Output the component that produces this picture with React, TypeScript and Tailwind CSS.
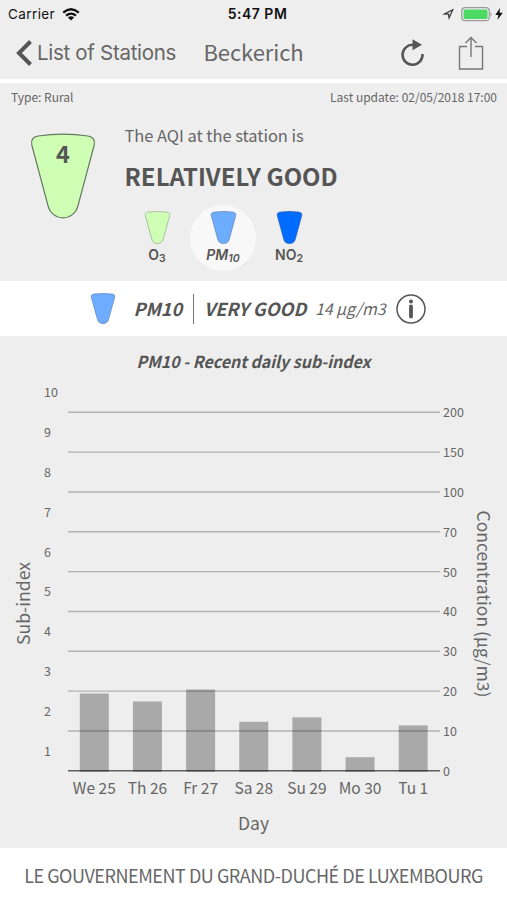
const days = [
  { label: 'We 25', value: 1.94 },
  { label: 'Th 26', value: 1.74 },
  { label: 'Fr 27', value: 2.04 },
  { label: 'Sa 28', value: 1.23 },
  { label: 'Su 29', value: 1.34 },
  { label: 'Mo 30', value: 0.34 },
  { label: 'Tu 1', value: 1.14 },
]

const concentrations = [200, 150, 100, 70, 50, 40, 30, 20, 10, 0]

const pollutants = [
  { name: 'O', sub: '3', color: '#ceffb5', stroke: '#93a889', active: false },
  { name: 'PM', sub: '10', color: '#6eacff', stroke: '#5b80b4', active: true },
  { name: 'NO', sub: '2', color: '#006cff', stroke: '#1d58ad', active: false },
]

// chart geometry
const TOP = 76.3
const STEP = 39.83
const BASE = TOP + STEP * 9
const LEFT = 68
const RIGHT = 440

function Cone({ color, stroke, strokeWidth = 1, className }: { color: string; stroke: string; strokeWidth?: number; className: string }) {
  return (
    <svg viewBox="0 0 64 86" className={className} preserveAspectRatio="none">
      <path
        d="M7 3Q32 -.8 57 3C62 3.800 64.300 7 63.200 12L46.800 73.400A15.300 15.300 0 0 1 17.200 73.400L.8 12C-.3 7 2 3.800 7 3Z"
        fill={color}
        stroke={stroke}
        strokeWidth={strokeWidth}
      />
    </svg>
  )
}

function StatusBar() {
  return (
    <div className="grid h-[26px] grid-cols-3 items-center pl-2 pr-1 pt-0.5 font-['Inter',sans-serif] text-[13.5px] leading-4 text-[#111]">
      <div className="flex items-center gap-[7px]">
        <span className="tracking-[0.4px]">Carrier</span>
        <svg viewBox="0 0 18 13" className="h-[13px] w-[18px]" fill="none" stroke="#111" strokeWidth="2.300">
          <path d="M1.200 4.600Q9-2 16.800 4.600" />
          <path d="M4 7.700Q9 3.600 14 7.700" />
          <path d="M9 12.500L5.900 9.400Q9 7 12.100 9.400Z" fill="#111" stroke="none" />
        </svg>
      </div>
      <span className="whitespace-nowrap pl-1 text-center text-[14px] font-semibold tracking-[0.5px]">5:47 PM</span>
      <div className="flex items-center justify-end">
        <svg viewBox="0 0 12 12" className="mr-[7px] size-3" fill="#333">
          <path fillRule="evenodd" d="M0 6.500L12 .5L6.800 12L6 6.800ZM4.600 5.600L7 5.500L7.400 7.800L9.600 3Z" />
        </svg>
        <svg viewBox="0 0 32 15" className="h-[15px] w-8">
          <rect x=".7" y=".7" width="27.600" height="13" rx="3.500" fill="none" stroke="#9a9a9a" strokeWidth="1.200" />
          <rect x="2.500" y="2.500" width="24" height="9.400" rx="1.500" fill="#4cd964" />
          <path d="M29.500 5Q32 7.200 29.500 9.500Z" fill="#9a9a9a" />
        </svg>
        <svg viewBox="0 0 8 12" className="ml-0.5 h-3 w-2" fill="#111">
          <path d="M5 0L.3 7H3.400L2.400 12L7.800 4.800H4.500Z" />
        </svg>
      </div>
    </div>
  )
}

function NavBar() {
  return (
    <div className="flex h-[53px] items-center pl-4 pr-[23px] text-[#666]">
      <svg viewBox="0 0 17 26" className="h-[26px] w-[17px]" fill="none" stroke="#555" strokeWidth="4">
        <path d="M14.500 1.500L3 13L14.500 24.500" />
      </svg>
      <span className="ml-1 w-[140px] whitespace-nowrap font-['Inter',sans-serif] text-[20.5px] leading-6 tracking-[-0.3px]">List of Stations</span>
      <h1 className="ml-[26.500px] whitespace-nowrap pb-[3px] text-[22px] leading-6 tracking-[-0.1px]">Beckerich</h1>
      <div className="ml-auto flex items-center gap-[34px]">
        <svg viewBox="0 0 24 28" className="h-7 w-6 overflow-visible" fill="none" stroke="#555" strokeWidth="2.500">
          <path d="M13 5.800A10 10 0 1 0 22.500 15" />
          <path d="M12.500 .3L22 5.800L12.500 11.300Z" fill="#555" stroke="none" />
        </svg>
        <svg viewBox="0 0 26 34" className="h-[34px] w-[26px]" fill="none" stroke="#777" strokeWidth="1.400">
          <path d="M9 10.500H1.500V33H24.500V10.500H17" />
          <path d="M13 21V1.500M7.500 7L13 1.500L18.500 7" />
        </svg>
      </div>
    </div>
  )
}

function Summary() {
  return (
    <section className="h-[198px] bg-[#eee]">
      <div className="flex justify-between px-[11px] pt-[6px] text-[12px] leading-4 text-[#666]">
        <span>Type: Rural</span>
        <span className="-mr-px">Last update: 02/05/2018 17:00</span>
      </div>
      <div className="flex pl-[31px]">
        <div className="grid pt-7">
          <Cone color="#ceffb5" stroke="#66785f" strokeWidth={1.2} className="col-start-1 row-start-1 h-[86px] w-16 overflow-visible" />
          <span className="z-10 col-start-1 row-start-1 pt-1.5 text-center text-[23.5px] font-bold leading-[29px] text-[#555]">4</span>
        </div>
        <div className="ml-[29.500px]">
          <p className="pt-[18px] text-[16.500px] leading-6 tracking-[-0.05px] text-[#666]">The AQI at the station is</p>
          <p className="mt-[13px] whitespace-nowrap text-[24px] font-bold leading-8 text-[#555]">RELATIVELY GOOD</p>
          <div className="-ml-[0.5px] mt-[13px] flex">
            {pollutants.map(p => (
              <div
                key={p.name}
                className={p.active ? 'flex size-[66px] flex-col items-center rounded-full bg-[#f8f8f8] pt-1.5' : 'flex size-[66px] flex-col items-center pt-1.5'}
              >
                <Cone color={p.color} stroke={p.stroke} strokeWidth={1.8} className="h-[33px] w-[25px] overflow-visible" />
                <span
                  className={p.active ? "mt-px font-['Inter',sans-serif] text-[14px] font-semibold italic leading-5 text-[#555]" : "mt-px font-['Inter',sans-serif] text-[14px] font-semibold leading-5 text-[#555]"}
                >
                  {p.name}
                  <span className="relative top-[2px] text-[10.500px]">{p.sub}</span>
                </span>
              </div>
            ))}
          </div>
        </div>
      </div>
    </section>
  )
}

function Detail() {
  return (
    <section className="flex h-[55px] items-center whitespace-nowrap bg-white pl-[91px] italic text-[#555]">
      <Cone color="#6eacff" stroke="#5b80b4" strokeWidth={1.8} className="h-[31px] w-6 overflow-visible" />
      <span className="ml-[18.500px] w-[58.500px] pb-0.5 text-[18px] font-bold leading-6">PM10</span>
      <span className="ml-px h-[30px] w-px bg-[#777]" />
      <span className="ml-[10px] w-[102px] pb-0.5 text-[18px] font-bold leading-6">VERY GOOD</span>
      <span className="ml-[9px] w-[71px] pb-0.5 text-[16px] leading-6 tracking-[-0.1px] text-[#666]">14 µg/m3</span>
      <svg viewBox="0 0 30 30" className="ml-[10px] size-[30px]" fill="none" stroke="#555">
        <circle cx="15" cy="15" r="14" strokeWidth="1.500" />
        <circle cx="15" cy="7.500" r="2" fill="#555" stroke="none" />
        <path d="M15 12.500V22.500" strokeWidth="3.800" strokeLinecap="round" />
      </svg>
    </section>
  )
}

function Chart() {
  return (
    <section className="h-[512px] bg-[#eee]">
      <svg viewBox="0 0 507 512" className="h-[512px] w-full" fill="#666">
        <text x="136.500" y="32" fontSize="16.500" fontWeight="700" fontStyle="italic" fill="#555" textLength="234" lengthAdjust="spacingAndGlyphs">
          PM10 - Recent daily sub-index
        </text>

        {days.map((d, i) => (
          <g key={d.label}>
            <rect x={79.8 + i * 53.15} y={BASE - d.value * STEP} width="29" height={d.value * STEP + 1} fill="#a9a9a9" />
            <text x={94.3 + i * 53.15} y="457.500" fontSize="15.500" textAnchor="middle">{d.label}</text>
          </g>
        ))}

        {concentrations.map((c, i) => (
          <g key={c}>
            <line x1={LEFT} x2={RIGHT} y1={TOP + i * STEP} y2={TOP + i * STEP} stroke="#000" strokeOpacity={c === 0 ? 0.6 : 0.25} strokeWidth="1.400" />
            <text x="443" y={TOP + i * STEP + 5} fontSize="12.500">{c}</text>
            <text x="44" y={TOP + i * STEP - 15} fontSize="12.500">{10 - i}</text>
          </g>
        ))}

        <text transform="translate(29.500 309) rotate(-90)" fontSize="17" textLength="83" lengthAdjust="spacingAndGlyphs">Sub-index</text>
        <text transform="translate(477 174.500) rotate(90)" fontSize="17" textLength="187" lengthAdjust="spacingAndGlyphs">Concentration (µg/m3)</text>
        <text x="253.500" y="493.500" fontSize="17.500" textAnchor="middle">Day</text>
      </svg>
    </section>
  )
}

export default function App() {
  return (
    <div className="h-[900px] w-[507px] overflow-hidden bg-white font-['Noto_Sans_CJK_SC',sans-serif]">
      <header className="mb-1 bg-[#eee]">
        <StatusBar />
        <NavBar />
      </header>
      <Summary />
      <Detail />
      <Chart />
      <footer className="flex h-[52px] items-center justify-center whitespace-nowrap pt-px text-[18px] leading-6 tracking-[-0.46px] text-[#666]">
        LE GOUVERNEMENT DU GRAND-DUCHÉ DE LUXEMBOURG
      </footer>
    </div>
  )
}
